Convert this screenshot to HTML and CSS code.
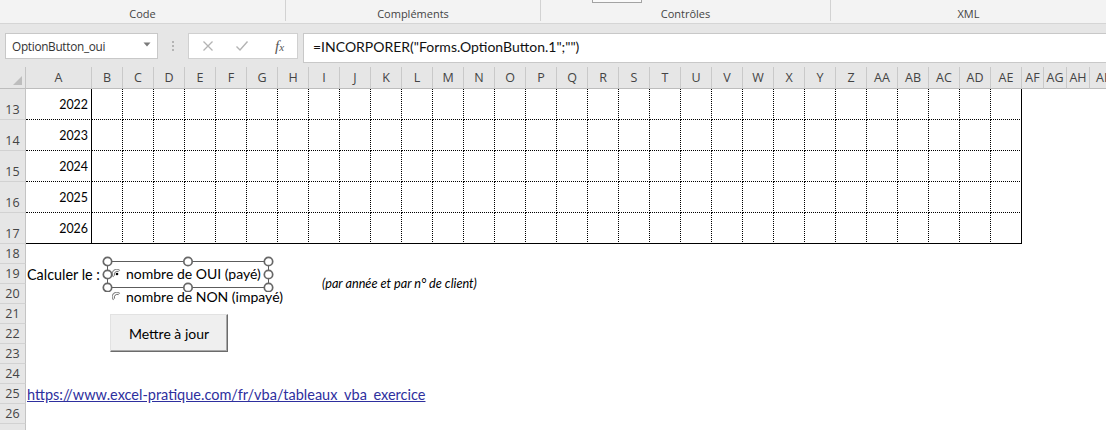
FILE: index.html
```html
<!DOCTYPE html>
<html lang="fr">
<head>
<meta charset="utf-8">
<title>Excel - tableaux VBA</title>
<link rel="stylesheet" href="styles.css">
</head>
<body>
<div class="ribbon">
  <div class="grp g-code"><span class="lbl">Code</span></div>
  <div class="grp g-comp"><span class="lbl">Compléments</span></div>
  <div class="grp g-ctrl"><span class="stub"></span><span class="lbl">Contrôles</span></div>
  <div class="grp g-xml"><span class="lbl">XML</span></div>
</div>

<div class="fbar">
  <div class="namebox">
    <span class="name">OptionButton_oui</span>
    <svg class="dd" width="8" height="5" viewBox="0 0 8 5"><path d="M0.5 0.5 L7.5 0.5 L4 4.5 Z" fill="#7a7a7a"/></svg>
  </div>
  <div class="grip"><i></i><i></i><i></i></div>
  <div class="fxbox">
    <svg class="ico" width="12" height="12" viewBox="0 0 12 12"><path d="M1.5 1.5 L10.5 10.5 M10.5 1.5 L1.5 10.5" stroke="#b3b3b3" stroke-width="1.3" fill="none"/></svg>
    <svg class="ico" width="14" height="12" viewBox="0 0 14 12"><path d="M1.5 6.5 L5 10 L12.5 1.5" stroke="#b3b3b3" stroke-width="1.4" fill="none"/></svg>
    <span class="fx"><span class="f">f</span><span class="x">x</span></span>
  </div>
  <div class="formula">=INCORPORER("Forms.OptionButton.1";"")</div>
</div>

<div class="sheet">
  <div class="corner"><svg width="9" height="9" viewBox="0 0 9 9"><path d="M9 0 L9 9 L0 9 Z" fill="#bdbdbd"/></svg></div>
  <div class="colheads">
    <div class="ch wA">A</div>
    <div class="ch">B</div><div class="ch">C</div><div class="ch">D</div><div class="ch">E</div><div class="ch">F</div>
    <div class="ch">G</div><div class="ch">H</div><div class="ch">I</div><div class="ch">J</div><div class="ch">K</div>
    <div class="ch">L</div><div class="ch">M</div><div class="ch">N</div><div class="ch">O</div><div class="ch">P</div>
    <div class="ch">Q</div><div class="ch">R</div><div class="ch">S</div><div class="ch">T</div><div class="ch">U</div>
    <div class="ch">V</div><div class="ch">W</div><div class="ch">X</div><div class="ch">Y</div><div class="ch">Z</div>
    <div class="ch">AA</div><div class="ch">AB</div><div class="ch">AC</div><div class="ch">AD</div><div class="ch">AE</div>
    <div class="ch wAF">AF</div><div class="ch wAG">AG</div><div class="ch wAH">AH</div><div class="ch wAI">AI</div>
  </div>
  <div class="rowheads">
    <div class="rh tall">13</div><div class="rh tall">14</div><div class="rh tall">15</div><div class="rh tall">16</div><div class="rh tall">17</div>
    <div class="rh">18</div><div class="rh">19</div><div class="rh">20</div><div class="rh">21</div><div class="rh">22</div>
    <div class="rh">23</div><div class="rh">24</div><div class="rh">25</div><div class="rh">26</div><div class="rh"></div>
  </div>
  <div class="cells">
    <table class="data">
      <tr><td class="yr">2022</td><td></td><td></td><td></td><td></td><td></td><td></td><td></td><td></td><td></td><td></td><td></td><td></td><td></td><td></td><td></td><td></td><td></td><td></td><td></td><td></td><td></td><td></td><td></td><td></td><td></td><td></td><td></td><td></td><td></td><td></td></tr>
      <tr><td class="yr">2023</td><td></td><td></td><td></td><td></td><td></td><td></td><td></td><td></td><td></td><td></td><td></td><td></td><td></td><td></td><td></td><td></td><td></td><td></td><td></td><td></td><td></td><td></td><td></td><td></td><td></td><td></td><td></td><td></td><td></td><td></td></tr>
      <tr><td class="yr">2024</td><td></td><td></td><td></td><td></td><td></td><td></td><td></td><td></td><td></td><td></td><td></td><td></td><td></td><td></td><td></td><td></td><td></td><td></td><td></td><td></td><td></td><td></td><td></td><td></td><td></td><td></td><td></td><td></td><td></td><td></td></tr>
      <tr><td class="yr">2025</td><td></td><td></td><td></td><td></td><td></td><td></td><td></td><td></td><td></td><td></td><td></td><td></td><td></td><td></td><td></td><td></td><td></td><td></td><td></td><td></td><td></td><td></td><td></td><td></td><td></td><td></td><td></td><td></td><td></td><td></td></tr>
      <tr><td class="yr">2026</td><td></td><td></td><td></td><td></td><td></td><td></td><td></td><td></td><td></td><td></td><td></td><td></td><td></td><td></td><td></td><td></td><td></td><td></td><td></td><td></td><td></td><td></td><td></td><td></td><td></td><td></td><td></td><td></td><td></td><td></td></tr>
    </table>
    <div class="row"></div>
    <div class="row"><span class="txt">Calculer le :</span></div>
    <div class="row"></div>
    <div class="row"></div>
    <div class="row"></div>
    <div class="row"></div>
    <div class="row"></div>
    <div class="row"><a class="link" href="#">https://www.excel-pratique.com/fr/vba/tableaux_vba_exercice</a></div>
    <div class="row"></div>
    <div class="row"></div>

    <div class="opt opt1">
      <svg class="radio" width="10" height="10" viewBox="0 0 10 10"><path d="M1.6 7.8 A4 4 0 0 1 7.8 1.6" stroke="#8c8c8c" stroke-width="1.2" fill="none"/><path d="M2.6 6.6 A3 3 0 0 1 6.6 2.6" stroke="#5a5a5a" stroke-width="0.9" fill="none"/><circle cx="5" cy="5" r="1.3" fill="#000"/></svg>
      <span>nombre de OUI (payé)</span>
    </div>
    <div class="opt opt2">
      <svg class="radio" width="10" height="10" viewBox="0 0 10 10"><path d="M1.6 7.8 A4 4 0 0 1 7.8 1.6" stroke="#8c8c8c" stroke-width="1.2" fill="none"/><path d="M2.6 6.6 A3 3 0 0 1 6.6 2.6" stroke="#5a5a5a" stroke-width="0.9" fill="none"/></svg>
      <span>nombre de NON (impayé)</span>
    </div>
    <svg class="selframe" width="172" height="36" viewBox="0 0 172 36">
      <rect x="5.5" y="5.5" width="161" height="26" fill="none" stroke="#5c5c5c" stroke-width="1"/>
      <g fill="#fff" stroke="#676767" stroke-width="1.7">
        <circle cx="5.5" cy="5.5" r="4.2"/><circle cx="86" cy="5.5" r="4.2"/><circle cx="166.5" cy="5.5" r="4.2"/>
        <circle cx="5.5" cy="18.5" r="4.2"/><circle cx="166.5" cy="18.5" r="4.2"/>
        <circle cx="5.5" cy="31.5" r="4.2"/><circle cx="86" cy="31.5" r="4.2"/><circle cx="166.5" cy="31.5" r="4.2"/>
      </g>
    </svg>
    <div class="note">(par année et par n° de client)</div>
    <div class="btn">Mettre à jour</div>
  </div>
</div>
</body>
</html>
```

FILE: styles.css
```css
html, body {
  margin: 0;
  padding: 0;
}
body {
  width: 1106px;
  height: 430px;
  overflow: hidden;
  background: #fff;
  font-family: "Lato", "Liberation Sans", sans-serif;
  color: #000;
}

/* ribbon */
.ribbon {
  display: flex;
  align-items: flex-start;
  height: 23px;
  background: #f3f3f3;
  border-bottom: 1px solid #d5d5d5;
}
.grp {
  position: relative;
  box-sizing: border-box;
  height: 21px;
  display: flex;
  align-items: flex-end;
  justify-content: center;
  border-right: 1px solid #d2d2d2;
  font-family: "Open Sans", "Noto Sans", sans-serif;
  font-size: 11px;
  color: #444;
}
.grp .lbl { line-height: 15px; }
.g-code { width: 286px; }
.g-comp { width: 255px; }
.g-ctrl { width: 290px; }
.g-xml { flex: 1; border-right: none; }
.stub {
  position: absolute;
  left: 51px;
  top: 0;
  width: 50px;
  height: 3px;
  box-sizing: border-box;
  border: 1px solid #a3a3a3;
  border-top: none;
  background: #fafafa;
}

/* formula bar */
.fbar {
  box-sizing: border-box;
  height: 43px;
  background: #e6e6e6;
  display: flex;
  align-items: flex-start;
  padding-top: 9px;
}
.namebox {
  box-sizing: border-box;
  margin-left: 5px;
  width: 153px;
  height: 26px;
  background: #fff;
  border: 1px solid #c8c8c8;
  display: flex;
  align-items: center;
  justify-content: space-between;
  padding: 0 6px 0 6px;
  font-family: "Open Sans", "Noto Sans", sans-serif;
  font-size: 11.8px;
  letter-spacing: -0.3px;
  color: #333;
}
.namebox .dd { margin-top: -3px; }
.grip {
  width: 30px;
  height: 26px;
  display: flex;
  flex-direction: column;
  align-items: center;
  justify-content: center;
  gap: 2px;
}
.grip i {
  display: block;
  width: 2px;
  height: 2px;
  background: #b4b4b4;
}
.fxbox {
  box-sizing: border-box;
  width: 110px;
  height: 26px;
  background: #fff;
  border: 1px solid #d0d0d0;
  display: flex;
  align-items: center;
  padding-left: 13px;
}
.fxbox .ico:nth-child(1) { margin-right: 21px; }
.fxbox .ico:nth-child(2) { margin-right: 26px; }
.fx {
  font-family: "Liberation Serif", serif;
  font-style: italic;
  color: #555;
  font-size: 15px;
  line-height: 1;
}
.fx .x { font-size: 11px; }
.formula {
  box-sizing: border-box;
  flex: 1;
  margin-left: 5px;
  height: 30px;
  background: #fff;
  border: 1px solid #c8c8c8;
  border-right: none;
  padding: 4px 0 0 9px;
  font-family: "Lato", sans-serif;
  font-size: 14px;
  color: #111;
  white-space: nowrap;
}

/* sheet */
.sheet {
  display: grid;
  grid-template-columns: 26px 1fr;
  grid-template-rows: 22px auto;
}
.corner {
  box-sizing: border-box;
  background: #e6e6e6;
  border-right: 1px solid #c4c4c4;
  border-bottom: 1px solid #bdbdbd;
  display: flex;
  align-items: flex-end;
  justify-content: flex-end;
  padding: 0 3px 3px 0;
}
.colheads {
  display: flex;
  height: 22px;
  overflow: hidden;
}
.ch {
  box-sizing: border-box;
  flex: none;
  width: 31px;
  height: 22px;
  background: #e6e6e6;
  border-right: 1px solid #c9c9c9;
  border-bottom: 1px solid #bdbdbd;
  display: flex;
  align-items: center;
  justify-content: center;
  font-family: "Open Sans", "Noto Sans", sans-serif;
  font-size: 12.5px;
  color: #444;
}
.ch.wA { width: 66px; }
.ch.wAF { width: 22px; }
.ch.wAG, .ch.wAH { width: 23px; }
.ch.wAI { width: 26px; border-right: none; justify-content: flex-start; padding-left: 6px; }

.rowheads {
  display: flex;
  flex-direction: column;
}
.rh {
  box-sizing: border-box;
  height: 20px;
  background: #e6e6e6;
  border-right: 1px solid #c4c4c4;
  border-bottom: 1px solid #d2d2d2;
  display: flex;
  align-items: flex-end;
  justify-content: center;
  padding-bottom: 1px;
  font-family: "Open Sans", "Noto Sans", sans-serif;
  font-size: 12.5px;
  line-height: 17px;
  color: #444;
}
.rh.tall { height: 31px; }

.cells {
  position: relative;
}
.data {
  border-collapse: separate;
  border-spacing: 0;
  table-layout: fixed;
  width: 996px;
}
.data tr { height: 31px; }
.data td {
  width: 30px;
  padding: 0;
  border-right: 1px dotted #000;
  border-bottom: 1px dotted #000;
}
.data td.yr {
  width: 62px;
  padding-right: 3px;
  border-right-style: solid;
  text-align: right;
  vertical-align: middle;
  font-size: 12.4px;
}
.data td:last-child { border-right-style: solid; }
.data tr:last-child td { border-bottom-style: solid; }

.row {
  height: 20px;
  display: flex;
  align-items: center;
  padding-left: 1px;
  font-size: 14.4px;
  white-space: nowrap;
}
.link {
  color: #2e2f9e;
  text-decoration: underline;
  font-size: 14.5px;
}

/* floating controls */
.opt {
  position: absolute;
  display: flex;
  align-items: center;
  gap: 4px;
  font-size: 14px;
  white-space: nowrap;
}
.opt1 { left: 86px; top: 176px; }
.opt2 { left: 86px; top: 199px; }
.selframe {
  position: absolute;
  left: 76px;
  top: 167px;
}
.note {
  position: absolute;
  left: 296px;
  top: 186px;
  font-size: 12.7px;
  font-style: italic;
  white-space: nowrap;
}
.btn {
  position: absolute;
  left: 84px;
  top: 225px;
  box-sizing: border-box;
  width: 118px;
  height: 38px;
  background: #efefef;
  border: 1px solid;
  border-color: #e2e2e2 #6b6b6b #6b6b6b #e2e2e2;
  box-shadow: inset -1px -1px 0 #a8a8a8;
  display: flex;
  align-items: center;
  justify-content: center;
  font-size: 14px;
}
```
